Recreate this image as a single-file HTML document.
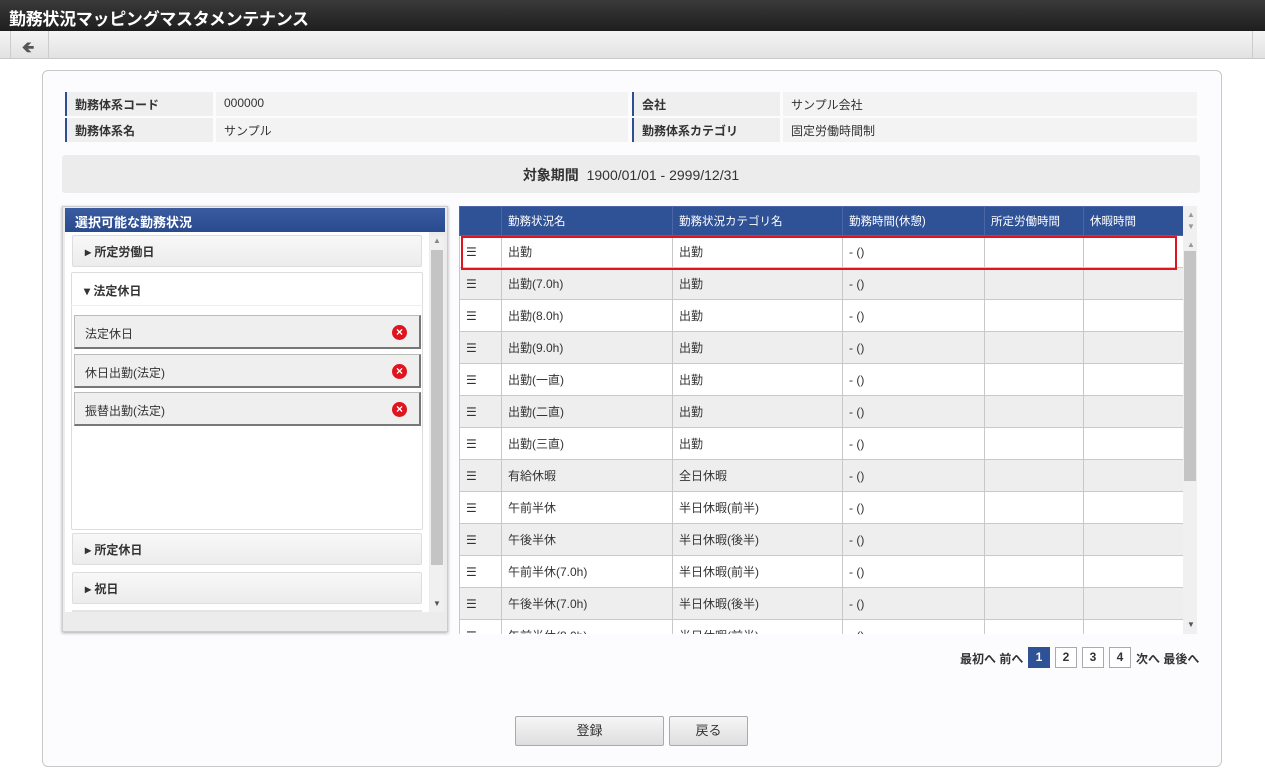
<!DOCTYPE html>
<html><head><meta charset="utf-8"><style>
*{box-sizing:border-box;margin:0;padding:0}
body{width:1265px;height:774px;background:#fff;font-family:"Liberation Sans","Noto Sans CJK JP",sans-serif;font-size:12px;color:#333;position:relative;overflow:hidden}
.a{position:absolute}
.title{left:0;top:0;width:1265px;height:31px;background:linear-gradient(#3a3a3a,#1e1e1e);color:#fff;font-size:17px;font-weight:bold;padding:5px 0 0 9px;letter-spacing:-0.3px}
.tool{left:0;top:31px;width:1265px;height:28px;background:linear-gradient(#f4f4f4,#e2e2e2);border-bottom:1px solid #c8c8c8}
.main{left:42px;top:70px;width:1180px;height:697px;border:1px solid #c8c8c8;border-radius:6px;background:#fcfcfe}
.lbl{background:#efefef;border-left:2px solid #2f4e91;font-weight:bold;padding:4px 0 0 8px;height:24px}
.val{background:#f3f3f3;padding:4px 0 0 8px;height:24px}
.acc{background:linear-gradient(#f8f8f8,#ececec);border:1px solid #ddd;border-radius:2px;font-weight:bold;padding:7px 0 0 12px}
.item{background:#efefef;border:1px solid #bbb;border-right:2px solid #777;border-bottom:2px solid #777;padding:9px 0 0 10px}
.x{position:absolute;right:12px;top:9px;width:15px;height:15px;border-radius:50%;background:#e0141e;color:#fff;font-size:12px;line-height:15px;text-align:center;font-weight:bold}
table{border-collapse:collapse;table-layout:fixed}
td,th{border:1px solid #c8c8c8;height:32px;padding:0 6px;text-align:left;font-weight:normal;white-space:nowrap;overflow:hidden}
th{background:#2f5196;color:#fff;height:29px;border-color:#4a66a6;font-size:11.5px}
tr.g td{background:#eeeeee}
tr.w td{background:#fff}
.pg{width:22px;height:21px;border:1px solid #aaa;background:#fff;text-align:center;line-height:19px;font-weight:bold;font-size:12px}
.btn{height:30px;border:1px solid #aaa;border-radius:2px;background:linear-gradient(#f6f6f6,#dedede);text-align:center;line-height:28px;font-size:13px}
</style></head><body>
<div class="a title">勤務状況マッピングマスタメンテナンス</div>
<div class="a tool"></div>
<div class="a" style="left:10px;top:31px;width:1px;height:28px;background:#ccc"></div>
<div class="a" style="left:48px;top:31px;width:1px;height:28px;background:#ccc"></div>
<div class="a" style="left:1252px;top:31px;width:1px;height:28px;background:#ccc"></div>
<div class="a" style="left:22px;top:37px;font-size:15px;color:#555;font-weight:bold">&#129144;</div>
<div class="a main"></div>

<div class="a lbl" style="left:65px;top:92px;width:148px">勤務体系コード</div>
<div class="a val" style="left:216px;top:92px;width:412px">000000</div>
<div class="a lbl" style="left:65px;top:118px;width:148px">勤務体系名</div>
<div class="a val" style="left:216px;top:118px;width:412px">サンプル</div>
<div class="a lbl" style="left:632px;top:92px;width:148px">会社</div>
<div class="a val" style="left:783px;top:92px;width:414px">サンプル会社</div>
<div class="a lbl" style="left:632px;top:118px;width:148px">勤務体系カテゴリ</div>
<div class="a val" style="left:783px;top:118px;width:414px">固定労働時間制</div>

<div class="a" style="left:62px;top:155px;width:1138px;height:38px;background:#ececec;border-radius:3px;text-align:center;padding-top:10px;font-size:14px"><b>対象期間</b>&nbsp; 1900/01/01 - 2999/12/31</div>

<div class="a" style="left:62px;top:206px;width:386px;height:426px;border:1px solid #ccc;background:#ececec;box-shadow:0 1px 3px #aaa"></div>
<div class="a" style="left:65px;top:208px;width:380px;height:24px;background:linear-gradient(#3a5ba0,#2a4a8e);color:#fff;font-weight:bold;font-size:13px;padding:4px 0 0 10px">選択可能な勤務状況</div>
<div class="a" style="left:65px;top:232px;width:364px;height:380px;background:#fff"></div>
<div class="a acc" style="left:72px;top:235px;width:350px;height:32px">▸ 所定労働日</div>
<div class="a" style="left:71px;top:272px;width:352px;height:258px;background:#fff;border:1px solid #ddd;border-radius:2px"></div>
<div class="a" style="left:84px;top:282px;font-weight:bold">▾ 法定休日</div>
<div class="a" style="left:71px;top:305px;width:352px;height:1px;background:#eee"></div>
<div class="a item" style="left:74px;top:315px;width:347px;height:34px">法定休日<span class="x">×</span></div>
<div class="a item" style="left:74px;top:354px;width:347px;height:34px">休日出勤(法定)<span class="x">×</span></div>
<div class="a item" style="left:74px;top:392px;width:347px;height:34px">振替出勤(法定)<span class="x">×</span></div>
<div class="a acc" style="left:72px;top:533px;width:350px;height:32px">▸ 所定休日</div>
<div class="a acc" style="left:72px;top:572px;width:350px;height:32px">▸ 祝日</div>
<div class="a" style="left:72px;top:610px;width:350px;height:2px;background:#e4e4e4"></div>
<div class="a" style="left:430px;top:236px;width:14px;height:376px;background:#f0f0f0"></div>
<div class="a" style="left:431px;top:250px;width:12px;height:315px;background:#c4c4c4"></div>
<div class="a" style="left:433px;top:236px;font-size:8px;color:#888">▲</div>
<div class="a" style="left:433px;top:599px;font-size:8px;color:#555">▼</div>

<div class="a" style="left:459px;top:206px;width:738px;height:428px;overflow:hidden;background:#fff">
<table style="width:724px">
<colgroup><col style="width:42px"><col style="width:171px"><col style="width:170px"><col style="width:142px"><col style="width:99px"><col style="width:100px"></colgroup>
<tr><th></th><th>勤務状況名</th><th>勤務状況カテゴリ名</th><th>勤務時間(休憩)</th><th>所定労働時間</th><th>休暇時間</th></tr>
<tr class="w"><td>☰</td><td>出勤</td><td>出勤</td><td>- ()</td><td></td><td></td></tr>
<tr class="g"><td>☰</td><td>出勤(7.0h)</td><td>出勤</td><td>- ()</td><td></td><td></td></tr>
<tr class="w"><td>☰</td><td>出勤(8.0h)</td><td>出勤</td><td>- ()</td><td></td><td></td></tr>
<tr class="g"><td>☰</td><td>出勤(9.0h)</td><td>出勤</td><td>- ()</td><td></td><td></td></tr>
<tr class="w"><td>☰</td><td>出勤(一直)</td><td>出勤</td><td>- ()</td><td></td><td></td></tr>
<tr class="g"><td>☰</td><td>出勤(二直)</td><td>出勤</td><td>- ()</td><td></td><td></td></tr>
<tr class="w"><td>☰</td><td>出勤(三直)</td><td>出勤</td><td>- ()</td><td></td><td></td></tr>
<tr class="g"><td>☰</td><td>有給休暇</td><td>全日休暇</td><td>- ()</td><td></td><td></td></tr>
<tr class="w"><td>☰</td><td>午前半休</td><td>半日休暇(前半)</td><td>- ()</td><td></td><td></td></tr>
<tr class="g"><td>☰</td><td>午後半休</td><td>半日休暇(後半)</td><td>- ()</td><td></td><td></td></tr>
<tr class="w"><td>☰</td><td>午前半休(7.0h)</td><td>半日休暇(前半)</td><td>- ()</td><td></td><td></td></tr>
<tr class="g"><td>☰</td><td>午後半休(7.0h)</td><td>半日休暇(後半)</td><td>- ()</td><td></td><td></td></tr>
<tr class="w"><td>☰</td><td>午前半休(8.0h)</td><td>半日休暇(前半)</td><td>- ()</td><td></td><td></td></tr>
</table>
<div class="a" style="left:724px;top:0;width:14px;height:428px;background:#f0f0f0"></div>
<div class="a" style="left:725px;top:45px;width:12px;height:230px;background:#c4c4c4"></div>
<div class="a" style="left:728px;top:4px;font-size:8px;color:#999">▲</div>
<div class="a" style="left:728px;top:16px;font-size:8px;color:#999">▼</div>
<div class="a" style="left:728px;top:34px;font-size:8px;color:#999">▲</div>
<div class="a" style="left:728px;top:414px;font-size:8px;color:#555">▼</div>
</div>
<div class="a" style="left:461px;top:236px;width:716px;height:34px;border:2px solid #e0141e"></div>

<div class="a" style="left:960px;top:650px;font-weight:bold">最初へ 前へ</div>
<div class="a pg" style="left:1028px;top:647px;background:#2f5196;color:#fff;border-color:#2f5196">1</div>
<div class="a pg" style="left:1055px;top:647px">2</div>
<div class="a pg" style="left:1082px;top:647px">3</div>
<div class="a pg" style="left:1109px;top:647px">4</div>
<div class="a" style="left:1136px;top:650px;font-weight:bold">次へ 最後へ</div>

<div class="a btn" style="left:515px;top:716px;width:149px">登録</div>
<div class="a btn" style="left:669px;top:716px;width:79px">戻る</div>
</body></html>
